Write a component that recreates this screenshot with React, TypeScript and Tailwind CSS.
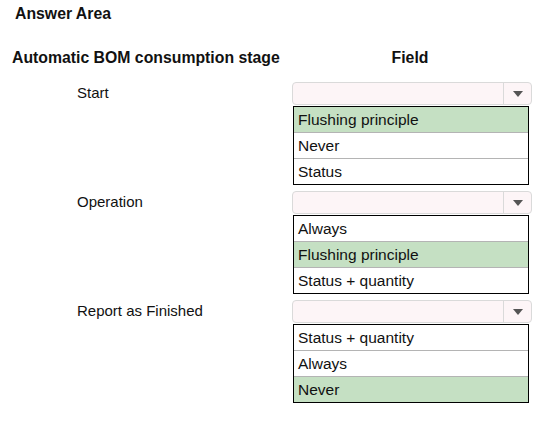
import React from 'react';

type Stage = {
  label: string;
  options: string[];
  picked: number;
};

const stages: Stage[] = [
  { label: 'Start', options: ['Flushing principle', 'Never', 'Status'], picked: 0 },
  { label: 'Operation', options: ['Always', 'Flushing principle', 'Status + quantity'], picked: 1 },
  { label: 'Report as Finished', options: ['Status + quantity', 'Always', 'Never'], picked: 2 },
];

function Dropdown({ options, picked }: { options: string[]; picked: number }) {
  return (
    <div className="w-[240px]">
      {/* closed select box */}
      <div className="h-[23px] flex rounded-[4px] border border-[#dadada] bg-[#fdf5f7]">
        <div className="flex-1" />
        <div className="w-[28px] border-l border-[#dadada] flex items-center justify-center">
          <div className="w-0 h-0 border-l-[5px] border-r-[5px] border-t-[6px] border-l-transparent border-r-transparent border-t-[#555555]" />
        </div>
      </div>

      {/* option list */}
      <div className="mt-px ml-px w-[236px] border border-black">
        {options.map((opt, i) => (
          <div
            key={opt}
            className={`flex items-center pl-[4px] text-[15.5px] ${
              i > 0 ? 'h-[26px] border-t border-[#b4b4b4]' : 'h-[25px]'
            } ${i === picked ? 'bg-[#c5e0c3]' : 'bg-white'}`}
          >
            {opt}
          </div>
        ))}
      </div>
    </div>
  );
}

export default function App() {
  return (
    <div className="w-[555px] h-[427px] bg-white text-[#111111] font-['Liberation_Sans',Arial,sans-serif]">
      <div className="pl-[15px] pt-[5px] text-[15.8px] leading-[18px] font-bold">Answer Area</div>

      {/* column headers */}
      <div className="mt-[26px] flex text-[15.8px] leading-[18px] font-bold">
        <div className="w-[292px] pl-[12px]">Automatic BOM consumption stage</div>
        <div className="w-[236px] text-center">Field</div>
      </div>

      <div className="mt-[15px] flex flex-col gap-[6px]">
        {stages.map((s) => (
          <div key={s.label} className="flex">
            <div className="w-[292px] pl-[77px]">
              <div className="h-[23px] flex items-center text-[15px]">{s.label}</div>
            </div>
            <Dropdown options={s.options} picked={s.picked} />
          </div>
        ))}
      </div>
    </div>
  );
}
